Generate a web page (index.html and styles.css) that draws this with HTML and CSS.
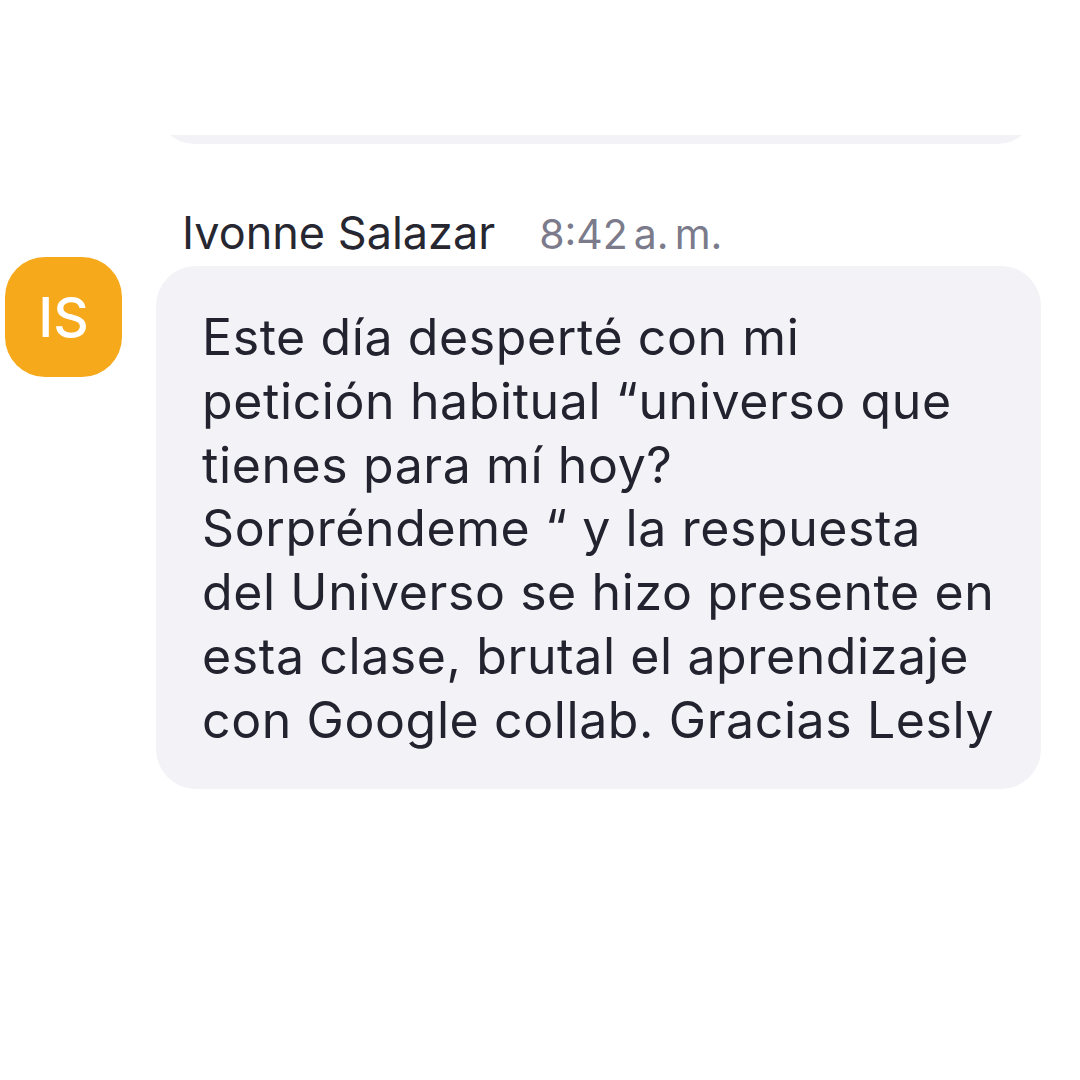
FILE: index.html
```html
<!DOCTYPE html>
<html lang="es">

<head>
    <meta name="viewport" content="width=device-width, initial-scale=1.0" />
    <title>Chat</title>
    <link rel="stylesheet" href="styles.css">
</head>

<body>
    <div class="chat">
        <div class="prev-bubble"></div>

        <div class="message">
            <div class="avatar">IS</div>

            <div class="message-body">
                <div class="meta">
                    <span class="sender">Ivonne Salazar</span>
                    <span class="time">8:42<span class="gap"></span>a.<span class="gap"></span>m.</span>
                </div>
                <div class="bubble">
                    Este día desperté con mi<br>
                    petición habitual “universo que<br>
                    tienes para mí hoy?<br>
                    Sorpréndeme “ y la respuesta<br>
                    del Universo se hizo presente en<br>
                    esta clase, brutal el aprendizaje<br>
                    con Google collab. Gracias Lesly
                </div>
            </div>
        </div>
    </div>
</body>

</html>
```

FILE: styles.css
```css
body {
    margin: 0;
    background-color: #fff;
    font-family: Inter, "Noto Sans", sans-serif;
    color: #23232f;
}

.chat {
    padding: 0 40px 0 5px;
}

/* bottom of the message above, mostly scrolled away */
.prev-bubble {
    height: 144px;
    margin-left: 150px;
    width: 882px;
    border-radius: 0 0 40px 40px;
    background: linear-gradient(to bottom, #fff 135px, #f3f3f7 135px);
}

.message {
    display: flex;
    gap: 34px;
    margin-top: 62px;
}

.avatar {
    flex: none;
    width: 117px;
    height: 120px;
    margin-top: 51px;
    border-radius: 40px;
    background-color: #f6a91b;
    color: #fff;
    font-size: 55px;
    font-weight: 500;
    display: flex;
    align-items: center;
    justify-content: center;
}

.message-body {
    flex: 1;
}

.meta {
    display: flex;
    align-items: baseline;
    gap: 44px;
    padding-left: 26px;
    margin-bottom: 5px;
    line-height: 54px;
}

.sender {
    font-size: 45px;
    color: #272732;
}

.time {
    font-size: 41px;
    color: #7b7b8b;
}

.gap {
    display: inline-block;
    width: 6px;
}

.bubble {
    width: 809px;
    padding: 40px 30px 36px 46px;
    border-radius: 40px;
    background-color: #f2f2f7;
    font-size: 50px;
    line-height: 63.8px;
    letter-spacing: 0.6px;
    white-space: nowrap;
}
```
